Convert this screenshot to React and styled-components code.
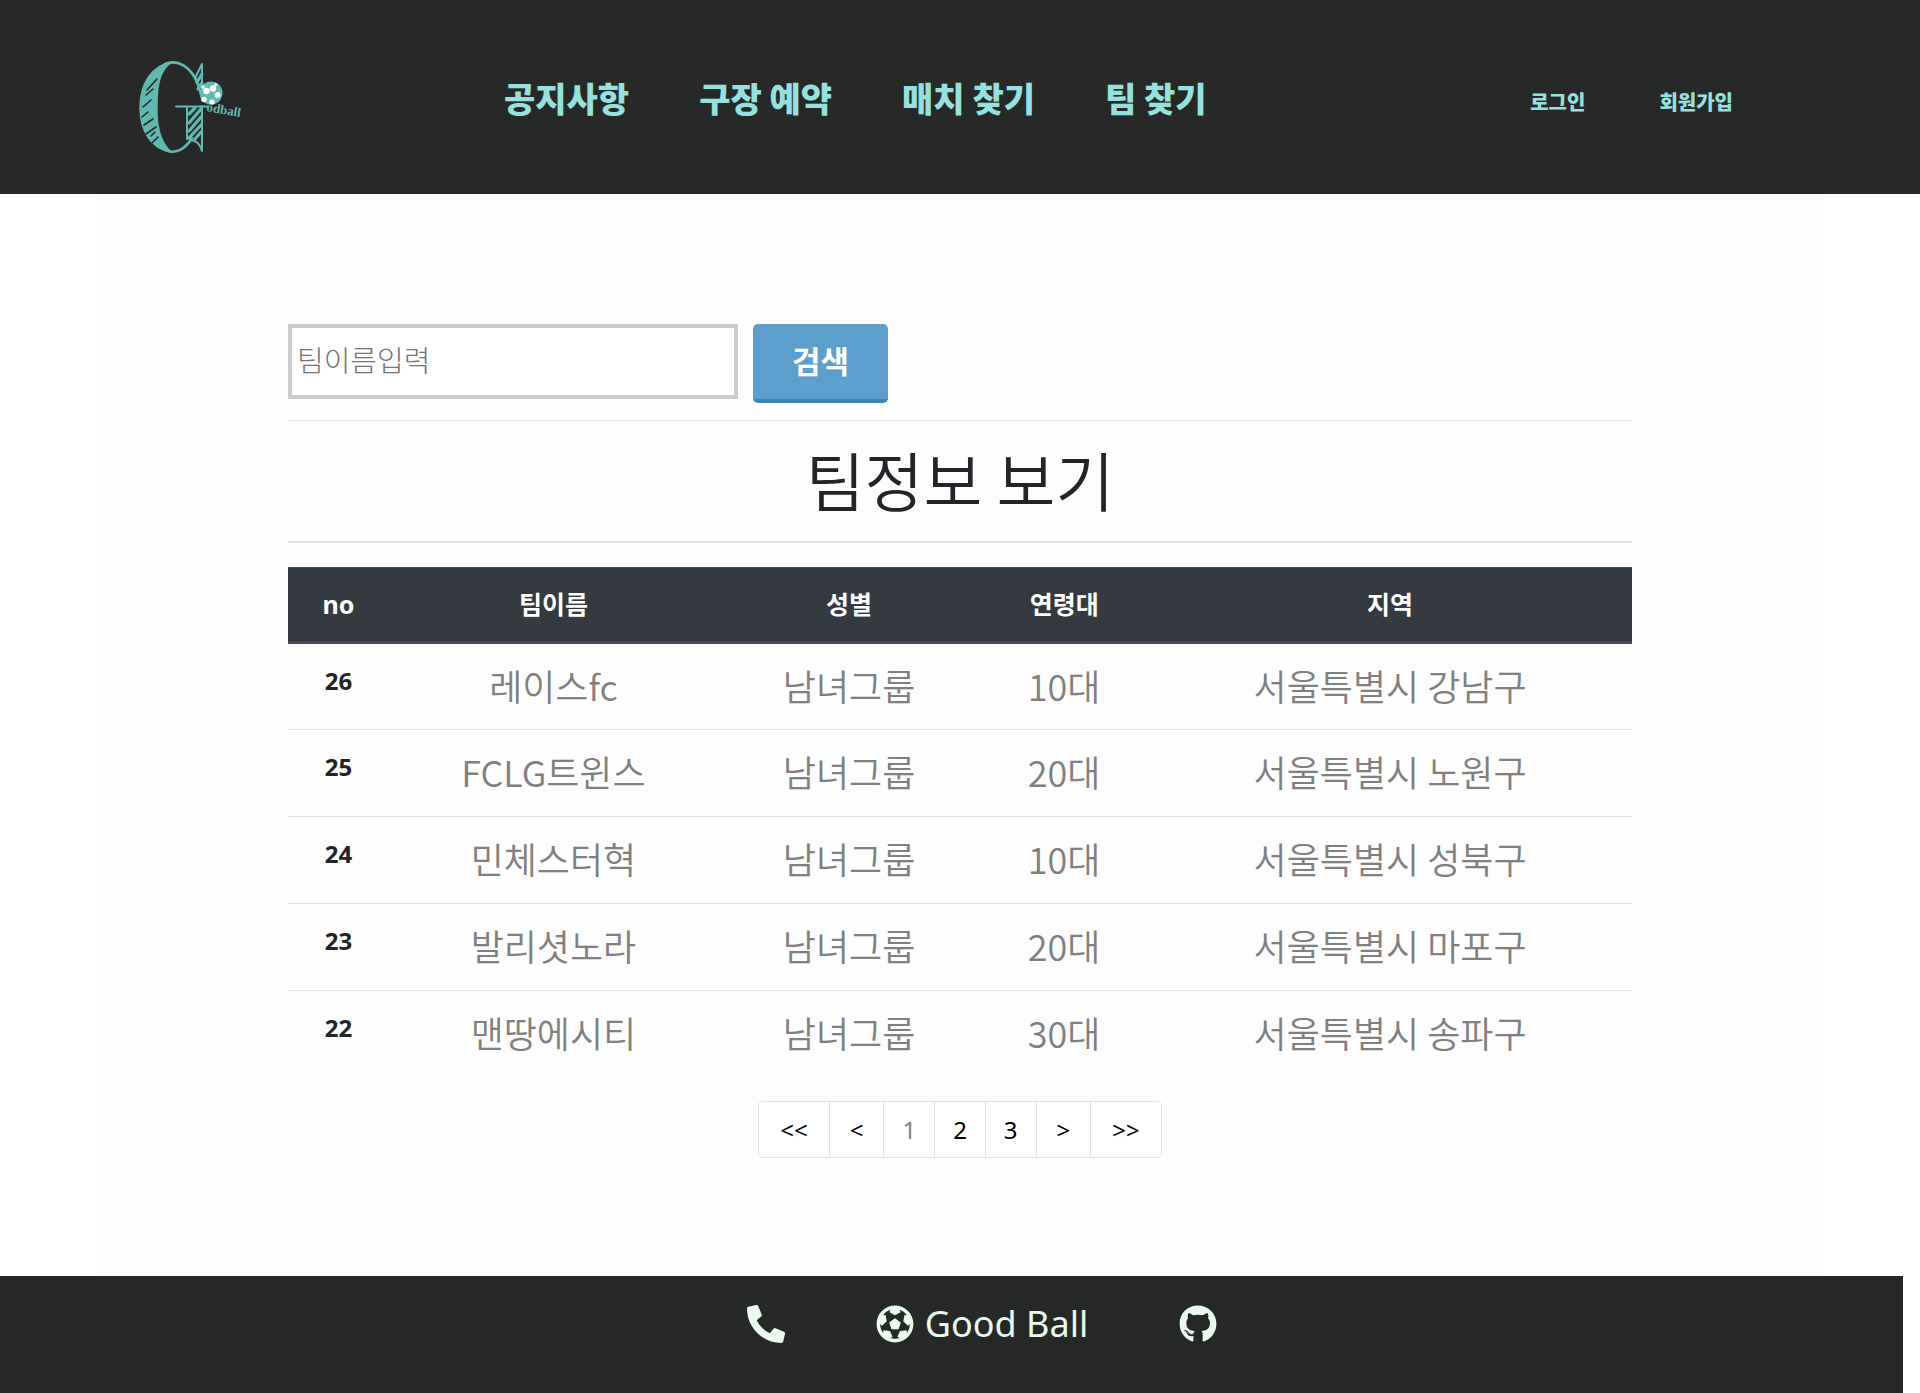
import React from "react";
import styled, { createGlobalStyle } from "styled-components";
import { FaPhoneAlt, FaFutbol, FaGithub } from "react-icons/fa";

const Global = createGlobalStyle`
  *, *::before, *::after { box-sizing: border-box; }
  body {
    margin: 0;
    background: #fff;
    color: #212529;
    font-family: "Noto Sans", "Noto Sans CJK KR", sans-serif;
    font-size: 24px;
    line-height: 36px;
  }
  a { color: inherit; text-decoration: none; }
`;

const Header = styled.header`
  display: flex;
  align-items: flex-start;
  padding: 60px 0 33px 138px;
  background: #272928;
  border-bottom: 5px solid #2a272a;
  color: #95e1df;
  font-family: "Noto Sans CJK KR", sans-serif;
  font-weight: 900;
`;

const LogoLink = styled.a`
  display: block;
  width: 104px;
  height: 96px;
`;

const MainNav = styled.nav`
  display: flex;
  gap: 70px;
  margin: 14px 0 0 262px;
  font-size: 34px;
  line-height: 48px;
  white-space: nowrap;
`;

const UserNav = styled.nav`
  display: flex;
  gap: 74px;
  margin: 28px 187px 0 auto;
  font-size: 20px;
  line-height: 28px;
  white-space: nowrap;
`;

const Main = styled.main`
  width: 90%;
  margin: 0 auto;
  padding: 130px 96px 118px;
  background: #fdfdfd;
`;

const Content = styled.div`
  width: 1344px;
  max-width: 100%;
  margin: 0 auto;
`;

const SearchForm = styled.form`
  display: flex;
  align-items: flex-start;
  gap: 15px;
`;

const SearchInput = styled.input`
  width: 450px;
  height: 75px;
  padding: 0 5px 6px;
  border: 4px solid #ccc;
  background: #fff;
  color: #212529;
  font-family: "Noto Sans CJK KR", sans-serif;
  font-size: 29px;
  font-weight: 300;
  &::placeholder { color: #757575; opacity: 1; }
`;

const SearchButton = styled.button`
  width: 135px;
  height: 79px;
  padding: 0 0 4px;
  border: 0;
  border-bottom: 4px solid #4183b1;
  border-radius: 5px;
  background: #5c9fcd;
  color: #fff;
  font-family: "Noto Sans CJK KR", sans-serif;
  font-size: 31px;
  font-weight: 700;
`;

const Rule = styled.hr`
  height: 0;
  margin: ${(p) => p.$gap};
  border: 0;
  border-top: ${(p) => p.$thick || "1px"} solid #e2e2e2;
`;

const Title = styled.h1`
  margin: 0;
  font-family: "Noto Sans CJK KR", sans-serif;
  font-size: 64px;
  font-weight: 350;
  line-height: 80px;
  text-align: center;
`;

const Table = styled.table`
  width: 100%;
  border-collapse: collapse;
  table-layout: fixed;
  text-align: center;
`;

const HeadCell = styled.th`
  width: ${(p) => p.$w};
  height: 75px;
  padding: 0 0 2px;
  background: #343a40;
  border-top: 1px solid #454d55;
  border-bottom: 3px solid #454d55;
  color: #fff;
  font-size: 25px;
  font-weight: 700;
`;

const NumberCell = styled.th`
  padding: 19px 0 0;
  font-size: 24px;
  font-weight: 700;
  vertical-align: top;
`;

const Row = styled.tr`
  height: 87px;
  & + & { border-top: 1px solid #dee2e6; }
`;

const Cell = styled.td`
  padding: 0 0 4px;
  color: #808080;
  font-family: "Noto Sans CJK KR", sans-serif;
  font-size: 36px;
  font-weight: 350;
  line-height: 48px;
`;

const Pager = styled.ul`
  display: flex;
  width: max-content;
  margin: 23px auto 0;
  padding: 0;
  list-style: none;
  border: 1px solid #dee2e6;
  border-radius: 5px;
  background: #fff;
`;

const PagerItem = styled.li`
  & + & { border-left: 1px solid #dee2e6; }
`;

const PagerLink = styled.a`
  display: block;
  padding: 10px ${(p) => p.$pad}px 9px;
  color: ${(p) => (p.$current ? "#808080" : "#000")};
`;

const Footer = styled.footer`
  display: flex;
  justify-content: center;
  margin-right: 17px;
  padding: 24px 0 43px 61px;
  background: #272928;
  border-bottom: 2px solid #2a272a;
`;

const FooterLink = styled.a`
  display: flex;
  align-items: center;
  gap: 11px;
  height: 48px;
  margin-right: 91px;
  color: #eafaee;
  font-size: 36px;
  line-height: 48px;
  &:last-child { margin-right: 0; }
`;

const columns = [
  ["no", "7.5%"],
  ["팀이름", "24.5%"],
  ["성별", "19.5%"],
  ["연령대", "12.5%"],
  ["지역", "36%"],
];

const teams = [
  [26, "레이스fc", "남녀그룹", "10대", "서울특별시 강남구"],
  [25, "FCLG트윈스", "남녀그룹", "20대", "서울특별시 노원구"],
  [24, "민체스터혁", "남녀그룹", "10대", "서울특별시 성북구"],
  [23, "발리셧노라", "남녀그룹", "20대", "서울특별시 마포구"],
  [22, "맨땅에시티", "남녀그룹", "30대", "서울특별시 송파구"],
];

const pages = [
  ["<<", 21],
  ["<", 20],
  ["1", 18],
  ["2", 18],
  ["3", 18],
  [">", 20],
  [">>", 21],
];

function Logo() {
  return (
    <svg viewBox="0 0 104 96" width="104" height="96" role="img" aria-label="Good Ball">
      <g fill="none" stroke="#61b8b0" strokeLinecap="round" strokeLinejoin="round">
        <path fill="#61b8b0" strokeWidth="1.500" d="M34 2C14 5 2 24 2 47c0 24 11 42 31 45C22 82 18 66 19 44 19 24 22 10 34 2Z" />
        <path strokeWidth="2.600" d="M27 4C40-1 53 6 61 26M24 88C37 97 48 88 54 78" />
        <path strokeWidth="2" d="M57 18 64 4V38C62 31 60 25 57 18Z M38 46.500H70M49 47V79M64 46V91C62 84 59 80 52 80" />
        <path strokeWidth="3.200" d="M59 22 64 14M60 29 64 23M51 54 57 48M51 63 63 49M51 71 63 57M51 78 63 65M57 79 63 72" />
      </g>
      <g stroke="#272928" strokeWidth="1.600" strokeLinecap="round">
        <path d="M9 30 19 19M8 35 15 29M5 47 13 40M4 57 10 52M6 65 15 59M8 74 18 67M13 76 17 72M14 83 20 77" />
      </g>
      <circle cx="73" cy="33" r="11.500" fill="#61b8b0" />
      <g fill="#fff">
        <circle cx="68.500" cy="31" r="3.200" />
        <circle cx="75" cy="28.500" r="3.200" />
        <circle cx="79.500" cy="35" r="3" />
        <circle cx="74" cy="42" r="2.600" />
        <circle cx="66" cy="39.500" r="2.800" />
        <circle cx="65" cy="27" r="1.800" />
        <circle cx="78" cy="24.500" r="1.500" />
      </g>
      <text x="68" y="51" transform="rotate(10 68 51)" fill="#61b8b0" fontFamily="Liberation Serif, serif" fontWeight="700" fontSize="13">odball</text>
    </svg>
  );
}

export default function App() {
  return (
    <>
      <Global />
      <Header>
        <LogoLink href="#"><Logo /></LogoLink>
        <MainNav>
          <a href="#">공지사항</a>
          <a href="#">구장 예약</a>
          <a href="#">매치 찾기</a>
          <a href="#">팀 찾기</a>
        </MainNav>
        <UserNav>
          <a href="#">로그인</a>
          <a href="#">회원가입</a>
        </UserNav>
      </Header>
      <Main>
        <Content>
          <SearchForm onSubmit={(e) => e.preventDefault()}>
            <SearchInput type="text" aria-label="팀이름입력" placeholder="팀이름입력" />
            <SearchButton type="submit">검색</SearchButton>
          </SearchForm>
          <Rule $gap="17px 0" />
          <Title>팀정보 보기</Title>
          <Rule $gap="23px 0 24px" $thick="2px" />
          <Table>
            <thead>
              <tr>
                {columns.map(([label, w]) => (
                  <HeadCell key={label} scope="col" $w={w}>{label}</HeadCell>
                ))}
              </tr>
            </thead>
            <tbody>
              {teams.map(([no, ...cells]) => (
                <Row key={no}>
                  <NumberCell scope="row">{no}</NumberCell>
                  {cells.map((c) => (
                    <Cell key={c}>{c}</Cell>
                  ))}
                </Row>
              ))}
            </tbody>
          </Table>
          <nav aria-label="페이지">
            <Pager>
              {pages.map(([label, pad]) => (
                <PagerItem key={label}>
                  <PagerLink href="#" $pad={pad} $current={label === "1"}>{label}</PagerLink>
                </PagerItem>
              ))}
            </Pager>
          </nav>
        </Content>
      </Main>
      <Footer>
        <FooterLink href="#" aria-label="전화"><FaPhoneAlt size={38} /></FooterLink>
        <FooterLink href="#"><FaFutbol size={38} />Good Ball</FooterLink>
        <FooterLink href="#" aria-label="GitHub"><FaGithub size={38} /></FooterLink>
      </Footer>
    </>
  );
}
